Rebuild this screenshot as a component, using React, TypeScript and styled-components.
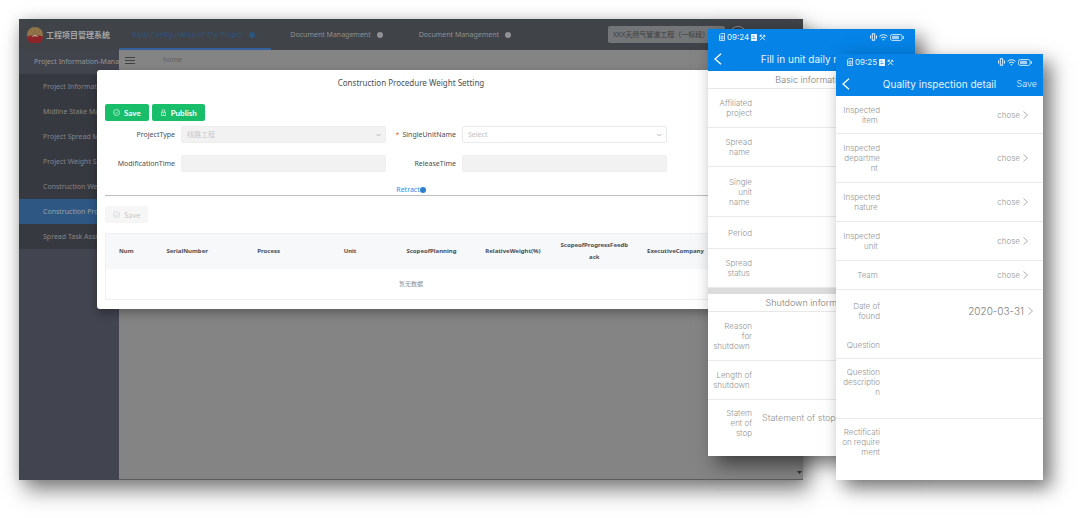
import React from 'react';
import styled, { createGlobalStyle, css } from 'styled-components';

const deskFont = '"Noto Sans", "Noto Sans CJK SC", sans-serif';
const phoneFont = 'Inter, "Noto Sans CJK SC", sans-serif';

const GlobalStyle = createGlobalStyle`
  *, *::before, *::after { box-sizing: border-box; }
  body { margin: 0; background: #fff; }
  button, input, select, textarea { font: inherit; margin: 0; }
  a { color: inherit; text-decoration: none; }
`;

const Stage = styled.main`
  position: relative;
  display: flex;
  min-height: 100vh;
  padding: 19px 277px 38px 19px;
  overflow: hidden;
`;

/* ---------- desktop window ---------- */

const Desktop = styled.section`
  position: relative;
  flex: 1;
  min-width: 0;
  display: flex;
  flex-direction: column;
  background: #848484;
  box-shadow: 6px 10px 20px rgba(0, 0, 0, 0.5), 0 0 12px rgba(0, 0, 0, 0.12);
  font-family: ${deskFont};
  font-size: 7px;
  line-height: 12px;
`;

const TopBar = styled.header`
  display: flex;
  align-items: stretch;
  height: 31px;
  background: #404347;
  color: #8f9193;
`;

const Brand = styled.div`
  display: flex;
  align-items: center;
  gap: 3px;
  width: 100px;
  padding-left: 8px;
  color: #a3a4a6;
  font-size: 8px;
  font-weight: 700;
  white-space: nowrap;
`;

const TopNav = styled.nav`
  display: flex;
`;

const TopLink = styled.a<{ $active?: boolean }>`
  display: flex;
  align-items: center;
  gap: 6px;
  padding: 0 13px;
  white-space: nowrap;
  margin-right: 10px;
  ${p => p.$active && css`
    color: #2d5580;
    border-bottom: 2px solid #35619c;
    padding: 2px 16px 0 13px;
    margin-right: 6px;
  `}
`;

const Dot = styled.span<{ $color: string }>`
  width: 6px;
  height: 6px;
  border-radius: 50%;
  background: ${p => p.$color};
`;

const TopTools = styled.div`
  display: flex;
  align-items: center;
  gap: 4px;
  margin-left: auto;
  padding-right: 56px;
`;

const ProjectSelect = styled.select`
  appearance: none;
  width: 117px;
  height: 17px;
  padding: 0 5px;
  border: 0;
  border-radius: 2px;
  background: #737577;
  color: #3c3e40;
  font-size: 7px;
`;

const Avatar = styled.button`
  width: 18px;
  height: 18px;
  border: 1px solid #8f9193;
  border-radius: 50%;
  background: #3a3c40;
`;

const Body = styled.div`
  flex: 1;
  display: flex;
`;

const Sidebar = styled.nav`
  width: 100px;
  background: #42444f;
  color: #83858a;
  overflow: hidden;
  white-space: nowrap;
`;

const SideTitle = styled.a`
  display: block;
  padding: 6px 0 6px 15px;
  background: #42444d;
  color: #95979c;
`;

const SideList = styled.ul`
  margin: 0;
  padding: 0;
  list-style: none;
  background: #373940;
`;

const SideLink = styled.a<{ $active?: boolean }>`
  display: block;
  padding: 7px 0 6px 24px;
  background: ${p => (p.$active ? '#2f5784' : 'transparent')};
  color: ${p => (p.$active ? '#9aa3ad' : 'inherit')};
`;

const Workspace = styled.div`
  flex: 1;
  display: flex;
  flex-direction: column;
  justify-content: space-between;
`;

const Crumbs = styled.div`
  display: flex;
  align-items: center;
  gap: 28px;
  height: 20px;
  padding-left: 6px;
  color: #5f6060;
`;

const MenuButton = styled.button`
  display: flex;
  padding: 0;
  border: 0;
  background: none;
`;

const ScrollCorner = styled.div`
  display: flex;
  justify-content: flex-end;
  height: 13px;
  padding: 4px 1px 0 0;
  border-bottom: 1px solid #5c5c5c;
`;

/* ---------- dialog ---------- */

const Dialog = styled.section`
  position: absolute;
  top: 51px;
  left: 78px;
  right: 78px;
  padding: 7px 8px 9px;
  border-radius: 3px;
  background: #fff;
  box-shadow: 0 4px 10px rgba(0, 0, 0, 0.3);
  color: #4c4f55;
`;

const DialogTitle = styled.h1`
  margin: 0 0 15px;
  font-size: 8px;
  font-weight: 400;
  line-height: 12px;
  text-align: center;
`;

const ButtonRow = styled.div`
  display: flex;
  gap: 3px;
`;

const ActionButton = styled.button`
  display: flex;
  align-items: center;
  gap: 4px;
  height: 17px;
  padding: 0 8px;
  border: 0;
  border-radius: 2px;
  background: #19be6b;
  color: #fff;
  font-family: Lato, "Noto Sans", sans-serif;
  font-size: 8px;
  font-weight: 700;
  &:disabled {
    background: #f6f6f6;
    color: #c8c9cc;
    font-weight: 400;
  }
`;

const Form = styled.form`
  display: grid;
  grid-template-columns: 1fr 1fr;
  row-gap: 12px;
  padding: 5px 50px 13px 0;
`;

const Field = styled.div`
  display: grid;
  grid-template-columns: 70px 1fr;
  column-gap: 6px;
  align-items: center;
`;

const FieldLabel = styled.label`
  text-align: right;
  white-space: nowrap;
`;

const Required = styled.span`
  margin-right: 3px;
  color: #e8623a;
`;

const controlStyle = css`
  display: block;
  width: 100%;
  height: 17px;
  padding: 0 5px;
  border: 1px solid #e9eaec;
  border-radius: 2px;
  background: #fff;
  color: #c0c2c6;
  &:disabled {
    background: #f2f2f2;
    border-color: #eeeeee;
    color: #c9c9c9;
    opacity: 1;
  }
`;

const TextInput = styled.input`
  ${controlStyle}
`;

const SelectBox = styled.div`
  display: grid;
  align-items: center;
  & > * { grid-area: 1 / 1; }
  & > svg { justify-self: end; margin-right: 5px; pointer-events: none; }
`;

const Select = styled.select`
  ${controlStyle}
  appearance: none;
`;

const RetractBar = styled.div`
  display: flex;
  justify-content: center;
  border-bottom: 1px solid #bcbec0;
  margin-bottom: 10px;
`;

const RetractButton = styled.button`
  display: flex;
  align-items: center;
  padding: 0;
  border: 0;
  background: none;
  color: #2d8cf0;
  line-height: 10px;
`;

const Table = styled.table`
  width: 100%;
  margin-top: 10px;
  border: 1px solid #eeeff2;
  border-collapse: collapse;
  table-layout: fixed;
`;

const HeadCell = styled.th`
  height: 35px;
  padding: 0 4px;
  background: #f7f8fa;
  color: #4a4d55;
  font-size: 6px;
  font-weight: 700;
  line-height: 12px;
  text-align: center;
  &:first-child { width: 41px; }
`;

const EmptyCell = styled.td`
  height: 31px;
  padding: 0;
  color: #8a8c90;
  font-size: 6px;
  text-align: center;
`;

/* ---------- phones ---------- */

const Phone = styled.section<{ $top: number; $right: number }>`
  position: absolute;
  top: ${p => p.$top}px;
  right: ${p => p.$right}px;
  width: 207px;
  background: #fff;
  box-shadow: 8px 8px 18px rgba(0, 0, 0, 0.55);
  color: #949494;
  font-family: ${phoneFont};
  font-size: 8px;
  font-weight: 300;
  line-height: 10px;
`;

const PhoneHead = styled.header`
  height: 42px;
  padding: 3px 6px 0;
  background: #0583e6;
  color: #e8f3fd;
`;

const StatusBar = styled.div`
  display: flex;
  justify-content: space-between;
  padding: 0 5px;
  font-weight: 400;
`;

const StatusGroup = styled.div`
  display: flex;
  align-items: center;
  gap: 2px;
`;

const TitleBar = styled.div`
  display: grid;
  grid-template-columns: 24px 1fr 24px;
  align-items: center;
  height: 33px;
`;

const PlainButton = styled.button`
  display: flex;
  align-items: center;
  gap: 3px;
  padding: 0;
  border: 0;
  background: none;
  color: inherit;
  white-space: nowrap;
`;

const ActionLink = styled(PlainButton)`
  justify-self: end;
  font-size: 9px;
`;

const PhoneTitle = styled.h2`
  margin: 0;
  font-size: 10px;
  font-weight: 400;
  text-align: center;
  white-space: nowrap;
`;

const GroupTitle = styled.h3<{ $band?: boolean }>`
  margin: 0;
  height: ${p => (p.$band ? 24 : 18)}px;
  border-top: ${p => (p.$band ? '6px solid #dcdcdc' : '0')};
  border-bottom: 1px solid #e8e8e8;
  color: #7c7c7c;
  font-size: 9px;
  font-weight: 300;
  line-height: 18px;
  text-align: center;
`;

const Row = styled.div<{ $height: number; $open?: boolean; $top?: boolean }>`
  display: grid;
  grid-template-columns: 40px 1fr;
  column-gap: 10px;
  align-items: ${p => (p.$top ? 'start' : 'center')};
  min-height: ${p => p.$height}px;
  padding: ${p => (p.$top ? '8px' : '0')} 15px 0 4px;
  border-bottom: ${p => (p.$open ? '0' : '1px solid #eaeaea')};
`;

const RowLabel = styled.label`
  display: flex;
  flex-direction: column;
  align-items: flex-end;
  overflow: hidden;
  white-space: pre;
`;

const PickButton = styled(PlainButton)`
  justify-self: end;
`;

const DateButton = styled(PickButton)`
  gap: 4px;
  margin-right: -5px;
  color: #7c7c7c;
  font-size: 10px;
`;

const PhoneInput = styled.input`
  width: 100%;
  height: 18px;
  padding: 0;
  border: 0;
  background: none;
  outline: none;
  font-size: 9px;
  &::placeholder { color: #949494; opacity: 1; }
`;

/* ---------- icons ---------- */

const Logo = () => (
  <svg width="16" height="16" viewBox="0 0 16 16" aria-hidden="true">
    <circle cx="8" cy="8" r="8" fill="#927549" />
    <path d="M8 0v9M3 2l4 7M13 2L9 9M0 7l7 3M16 7l-7 3" stroke="#7d6544" strokeWidth=".6" />
    <path d="M0 9.500Q8 7 16 9.500A8 8 0 0 1 0 9.500Z" fill="#8d2429" />
    <path d="M4.500 10Q8 5.500 11.500 10Q8 8.500 4.500 10Z" fill="#b7a78f" />
  </svg>
);

const MenuIcon = () => (
  <svg width="10" height="8" viewBox="0 0 10 8" stroke="#3f4143" aria-hidden="true">
    <path d="M0 1.500h10M0 4.500h10M0 7.500h10" />
  </svg>
);

const CheckIcon = () => (
  <svg width="7" height="7" viewBox="0 0 14 14" fill="none" stroke="currentColor" strokeWidth="1.200" aria-hidden="true">
    <circle cx="7" cy="7" r="6" />
    <path d="M4 7.200l2.200 2.200L10 5" />
  </svg>
);

const LockIcon = () => (
  <svg width="7" height="7" viewBox="0 0 14 14" fill="none" stroke="currentColor" strokeWidth="1.200" aria-hidden="true">
    <path d="M3 6.500h8V13H3zM4.500 6.500V4a2.500 3 0 0 1 5 0v2.500M7 9v2" />
  </svg>
);

const DownIcon = () => (
  <svg width="5" height="4" viewBox="0 0 5 4" fill="none" stroke="#a5a7ab" strokeWidth=".8" aria-hidden="true">
    <path d="M.5 1l2 2 2-2" />
  </svg>
);

const BackIcon = () => (
  <svg width="8" height="12" viewBox="0 0 8 12" fill="none" stroke="#fff" strokeWidth="1.300" aria-hidden="true">
    <path d="M7 .7L1 6l6 5.300" />
  </svg>
);

const NextIcon = () => (
  <svg width="5" height="8" viewBox="0 0 5 8" fill="none" stroke="#a8a8a8" strokeWidth=".9" aria-hidden="true">
    <path d="M.5.5l4 3.500-4 3.500" />
  </svg>
);

const SimIcon = () => (
  <svg width="6" height="8" viewBox="0 0 6 8" fill="none" stroke="currentColor" strokeWidth=".8" aria-hidden="true">
    <path d="M.5 2L2 .5h3.500v7h-5zM2 3h2v3H2z" />
  </svg>
);

const CardIcon = () => (
  <svg width="6" height="7" viewBox="0 0 6 7" aria-hidden="true">
    <path d="M0 0h6v7H0z" fill="currentColor" />
    <path d="M1.500 2.200h2M1.500 4.500h3" stroke="#0583e6" strokeWidth=".7" />
  </svg>
);

const ToolsIcon = () => (
  <svg width="7" height="7" viewBox="0 0 7 7" fill="none" stroke="currentColor" aria-hidden="true">
    <path d="M1 6.200L5.500 1.700M2 2.200L6 6.200" strokeWidth=".9" />
    <path d="M.6 2.600L2.600.8M4.600.9l1.600 1.700" strokeWidth="1.300" />
  </svg>
);

const VibrateIcon = () => (
  <svg width="7" height="8" viewBox="0 0 7 8" fill="none" stroke="currentColor" aria-hidden="true">
    <path d="M2.300.7h2.400v6.600H2.300zM.5 2.500v3M6.500 2.500v3" strokeWidth="1" />
  </svg>
);

const WifiIcon = () => (
  <svg width="9" height="7" viewBox="0 0 9 7" fill="none" stroke="currentColor" strokeWidth="1" aria-hidden="true">
    <path d="M.5 2.300Q4.500-.8 8.500 2.300M2 4Q4.500 2 7 4" />
    <path d="M3.300 5.200h2.400L4.500 6.700z" fill="currentColor" stroke="none" />
  </svg>
);

const BatteryIcon = () => (
  <svg width="14" height="7" viewBox="0 0 14 7" aria-hidden="true">
    <rect x=".5" y=".5" width="11.500" height="6" rx="1.800" fill="none" stroke="currentColor" strokeWidth=".8" />
    <rect x="2" y="1.800" width="7" height="3.400" rx=".6" fill="currentColor" opacity=".7" />
    <path d="M13.300 2v3" stroke="currentColor" strokeWidth=".9" />
  </svg>
);

/* ---------- data ---------- */

const sideItems = [
  'Project Information',
  'Midline Stake Management',
  'Project Spread Management',
  'Project Weight Setting',
  'Construction Weight Setting',
  'Construction Procedure Weight',
  'Spread Task Assignment',
];

const columns = [
  'SerialNumber',
  'Process',
  'Unit',
  'ScopeofPlanning',
  'RelativeWeight(%)',
  'ScopeofProgressFeedb\u200Back',
  'ExecutiveCompany',
];

type RowData = { id: string; lines: string[]; height: number };

const basicRows: RowData[] = [
  { id: 'affiliated', lines: ['Affiliated', 'project'], height: 39 },
  { id: 'spread', lines: ['Spread', 'name '], height: 39 },
  { id: 'single', lines: ['Single', 'unit', 'name '], height: 50 },
  { id: 'period', lines: ['Period'], height: 32 },
  { id: 'status', lines: ['Spread', 'status '], height: 39 },
];

const shutdownRows: RowData[] = [
  { id: 'reason', lines: ['Reason', 'for', 'shutdown '], height: 49 },
  { id: 'length', lines: ['Length of', 'shutdown '], height: 39 },
];

const pickRows: RowData[] = [
  { id: 'item', lines: ['Inspected', 'item '], height: 38 },
  { id: 'department', lines: ['Inspected', 'departme', 'nt '], height: 49 },
  { id: 'nature', lines: ['Inspected', 'nature '], height: 39 },
  { id: 'unit', lines: ['Inspected', 'unit '], height: 39 },
  { id: 'team', lines: ['Team '], height: 29 },
];

const LabelLines = ({ id, lines }: { id: string; lines: string[] }) => (
  <RowLabel htmlFor={id}>
    {lines.map(line => <span key={line}>{line}</span>)}
  </RowLabel>
);

const InputRow = ({ row, placeholder, open, top }: {
  row: RowData; placeholder?: string; open?: boolean; top?: boolean;
}) => (
  <Row $height={row.height} $open={open} $top={top}>
    <LabelLines id={row.id} lines={row.lines} />
    <PhoneInput id={row.id} placeholder={placeholder} />
  </Row>
);

const PhoneHeader = ({ time, title, action }: { time: string; title: string; action?: string }) => (
  <PhoneHead>
    <StatusBar>
      <StatusGroup><SimIcon />{time}<CardIcon /><ToolsIcon /></StatusGroup>
      <StatusGroup><VibrateIcon /><WifiIcon /><BatteryIcon /></StatusGroup>
    </StatusBar>
    <TitleBar>
      <PlainButton type="button" aria-label="Back"><BackIcon /></PlainButton>
      <PhoneTitle>{title}</PhoneTitle>
      {action && <ActionLink type="button">{action}</ActionLink>}
    </TitleBar>
  </PhoneHead>
);

const WeightDialog = () => (
  <Dialog role="dialog" aria-labelledby="dialog-title">
    <DialogTitle id="dialog-title">Construction Procedure Weight Setting</DialogTitle>
    <ButtonRow>
      <ActionButton type="button"><CheckIcon />Save</ActionButton>
      <ActionButton type="button"><LockIcon />Publish</ActionButton>
    </ButtonRow>
    <Form>
      <Field>
        <FieldLabel htmlFor="project-type">ProjectType</FieldLabel>
        <SelectBox>
          <Select id="project-type" disabled><option>线路工程</option></Select>
          <DownIcon />
        </SelectBox>
      </Field>
      <Field>
        <FieldLabel htmlFor="unit-name"><Required>*</Required>SingleUnitName</FieldLabel>
        <SelectBox>
          <Select id="unit-name"><option>Select</option></Select>
          <DownIcon />
        </SelectBox>
      </Field>
      <Field>
        <FieldLabel htmlFor="modified">ModificationTime</FieldLabel>
        <TextInput id="modified" disabled />
      </Field>
      <Field>
        <FieldLabel htmlFor="released">ReleaseTime</FieldLabel>
        <TextInput id="released" disabled />
      </Field>
    </Form>
    <RetractBar>
      <RetractButton type="button">Retract<Dot $color="#2d7fd0" /></RetractButton>
    </RetractBar>
    <ButtonRow>
      <ActionButton type="button" disabled><CheckIcon />Save</ActionButton>
    </ButtonRow>
    <Table>
      <thead>
        <tr>
          <HeadCell scope="col">Num</HeadCell>
          {columns.map(name => <HeadCell key={name} scope="col">{name}</HeadCell>)}
        </tr>
      </thead>
      <tbody>
        <tr><EmptyCell colSpan={8}>暂无数据</EmptyCell></tr>
      </tbody>
    </Table>
  </Dialog>
);

export default function App() {
  return (
    <>
      <GlobalStyle />
      <Stage>
        <Desktop>
          <TopBar>
            <Brand><Logo />工程项目管理系统</Brand>
            <TopNav>
              <TopLink href="#config" $active>Basic Configuration of The Project<Dot $color="#2d5580" /></TopLink>
              <TopLink href="#documents">Document Management<Dot $color="#8f9193" /></TopLink>
              <TopLink href="#files">Document Management<Dot $color="#8f9193" /></TopLink>
            </TopNav>
            <TopTools>
              <ProjectSelect aria-label="Project"><option>XXX天然气管道工程（一标段）</option></ProjectSelect>
              <Avatar type="button" aria-label="Account" />
            </TopTools>
          </TopBar>
          <Body>
            <Sidebar>
              <SideTitle href="#information">Project Information-Management</SideTitle>
              <SideList>
                {sideItems.map((item, i) => (
                  <li key={item}><SideLink href="#item" $active={i === 5}>{item}</SideLink></li>
                ))}
              </SideList>
            </Sidebar>
            <Workspace>
              <Crumbs>
                <MenuButton type="button" aria-label="Toggle menu"><MenuIcon /></MenuButton>
                <a href="#home">home</a>
              </Crumbs>
              <ScrollCorner>
                <svg width="5" height="3" viewBox="0 0 5 3" aria-hidden="true"><path d="M0 0h5L2.500 3z" fill="#333" /></svg>
              </ScrollCorner>
            </Workspace>
          </Body>
          <WeightDialog />
        </Desktop>

        <Phone $top={29} $right={165}>
          <PhoneHeader time="09:24" title="Fill in unit daily report" />
          <GroupTitle>Basic information</GroupTitle>
          {basicRows.map(row => <InputRow key={row.id} row={row} />)}
          <GroupTitle $band>Shutdown information</GroupTitle>
          {shutdownRows.map(row => <InputRow key={row.id} row={row} />)}
          <InputRow
            row={{ id: 'statement', lines: ['Statem', 'ent of', 'stop'], height: 56 }}
            placeholder="Statement of stop"
            open
            top
          />
        </Phone>

        <Phone $top={54} $right={37}>
          <PhoneHeader time="09:25" title="Quality inspection detail" action="Save" />
          {pickRows.map(row => (
            <Row key={row.id} $height={row.height}>
              <LabelLines id={row.id} lines={row.lines} />
              <PickButton id={row.id} type="button">chose<NextIcon /></PickButton>
            </Row>
          ))}
          <Row $height={42} $open>
            <LabelLines id="found" lines={['Date of', 'found']} />
            <DateButton id="found" type="button">2020-03-31<NextIcon /></DateButton>
          </Row>
          <InputRow row={{ id: 'question', lines: ['Question'], height: 27 }} />
          <InputRow row={{ id: 'description', lines: ['Question', 'descriptio', 'n'], height: 60 }} top />
          <InputRow row={{ id: 'rectification', lines: ['Rectificati', 'on require', 'ment'], height: 61 }} open top />
        </Phone>
      </Stage>
    </>
  );
}
